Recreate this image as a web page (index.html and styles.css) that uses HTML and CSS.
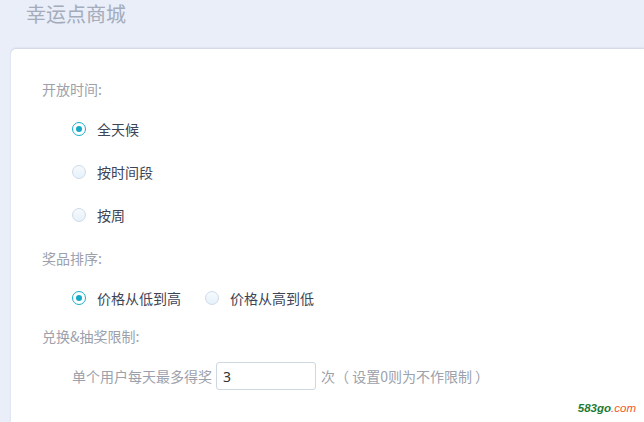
FILE: index.html
```html
<!DOCTYPE html>
<html lang="zh-CN">
<head>
<meta charset="utf-8">
<title>幸运点商城</title>
<link rel="stylesheet" href="styles.css">
</head>
<body>
<div class="page">
  <h1 class="title">幸运点商城</h1>
  <div class="card">
    <div class="group">
      <div class="label">开放时间:</div>
      <div class="options col">
        <label class="option"><span class="radio on"></span>全天候</label>
        <label class="option"><span class="radio"></span>按时间段</label>
        <label class="option"><span class="radio"></span>按周</label>
      </div>
    </div>
    <div class="group g2">
      <div class="label">奖品排序:</div>
      <div class="options row">
        <label class="option"><span class="radio on"></span>价格从低到高</label>
        <label class="option"><span class="radio"></span>价格从高到低</label>
      </div>
    </div>
    <div class="group g3">
      <div class="label">兑换&amp;抽奖限制:</div>
      <div class="limit">
        <span class="hint">单个用户每天最多得奖</span>
        <input class="num" type="text" value="3">
        <span class="hint">次（ 设置0则为不作限制 ）</span>
      </div>
    </div>
  </div>
</div>
<div class="mark"><span class="m1">583go</span><span class="m2">.com</span></div>
</body>
</html>
```
FILE: styles.css
```css
html, body {
  margin: 0;
  padding: 0;
  height: 100%;
  overflow: hidden;
  background: #e9eef9;
  font-family: "Noto Sans CJK SC", "Noto Sans", sans-serif;
}
.page {
  padding-left: 11px;
  height: 100%;
  display: flex;
  flex-direction: column;
}
.title {
  margin: 0 0 21px 15px;
  height: 28px;
  line-height: 27px;
  font-size: 20px;
  font-weight: normal;
  color: #a4acbb;
  flex: none;
}
.card {
  flex: 1;
  background: #fff;
  border-radius: 5px 0 0 0;
  box-shadow: 0 -1px 2px rgba(120, 130, 150, 0.25);
  padding: 30px 0 0 31px;
  box-sizing: border-box;
}
.label {
  height: 20px;
  line-height: 20px;
  font-size: 14px;
  color: #9ca1ab;
}
.options {
  margin-top: 8px;
  padding-left: 30px;
  display: flex;
}
.options.col { flex-direction: column; }
.options.row { flex-direction: row; gap: 24px; }
.option {
  height: 43px;
  display: flex;
  align-items: center;
  font-size: 14px;
  color: #3d4454;
}
.radio {
  width: 14px;
  height: 14px;
  box-sizing: border-box;
  border: 1px solid #cfdbe8;
  border-radius: 50%;
  background: linear-gradient(#f6fafd, #e6f1fa);
  margin-right: 11px;
  display: flex;
  align-items: center;
  justify-content: center;
}
.radio.on {
  border-color: #1aaec8;
  background: #fff;
}
.radio.on::after {
  content: "";
  width: 6px;
  height: 6px;
  border-radius: 50%;
  background: #15a9c3;
}
.g2 { margin-top: 12px; }
.g3 { margin-top: 7px; }
.limit {
  margin-top: 16px;
  padding-left: 30px;
  display: flex;
  align-items: center;
  height: 28px;
}
.hint {
  font-size: 14px;
  color: #9ca1ab;
}
.num {
  width: 100px;
  height: 28px;
  box-sizing: border-box;
  margin: 0 5px 0 4px;
  border: 1px solid #cdd8e3;
  border-radius: 3px;
  padding: 0 6px;
  font-size: 14px;
  font-family: "Noto Sans", sans-serif;
  color: #333;
  outline: none;
}
.mark {
  position: absolute;
  right: 8px;
  bottom: 8px;
  font-family: "Liberation Sans", sans-serif;
  font-size: 11.5px;
  font-style: italic;
}
.m1 { color: #1d7a32; font-weight: bold; }
.m2 { color: #f0582a; }
```
